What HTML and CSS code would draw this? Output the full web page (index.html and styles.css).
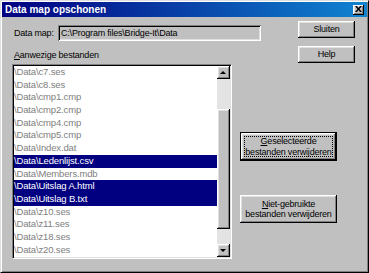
FILE: index.html
```html
<!DOCTYPE html>
<html>
<head>
<meta charset="utf-8">
<link rel="stylesheet" href="styles.css">
</head>
<body>
<div class="window">
  <div class="titlebar">
    <span class="title">Data map opschonen</span>
    <span class="close"><svg width="7" height="6" viewBox="0 0 7 6"><path d="M0 0h2l1.5 2L5 0h2L4.5 3 7 6H5L3.5 4 2 6H0l2.5-3z" fill="#000"/></svg></span>
  </div>
  <div class="content">
    <div class="fieldrow">
      <span class="lbl">Data map:</span>
      <div class="field">C:\Program files\Bridge-It\Data</div>
    </div>
    <button class="btn small sluiten">Sluiten</button>
    <div class="listlabel"><u>A</u>anwezige bestanden</div>
    <button class="btn small help">Help</button>
    <div class="listbox">
      <ul class="items">
        <li>\Data\c7.ses</li>
        <li>\Data\c8.ses</li>
        <li>\Data\cmp1.cmp</li>
        <li>\Data\cmp2.cmp</li>
        <li>\Data\cmp4.cmp</li>
        <li>\Data\cmp5.cmp</li>
        <li>\Data\Index.dat</li>
        <li class="sel">\Data\Ledenlijst.csv</li>
        <li>\Data\Members.mdb</li>
        <li class="sel">\Data\Uitslag A.html</li>
        <li class="sel">\Data\Uitslag B.txt</li>
        <li>\Data\z10.ses</li>
        <li>\Data\z11.ses</li>
        <li>\Data\z18.ses</li>
        <li>\Data\z20.ses</li>
      </ul>
      <div class="scrollbar">
        <div class="arrow"><span class="tri up"></span></div>
        <div class="track t1"></div>
        <div class="thumb"></div>
        <div class="track t2"></div>
        <div class="arrow"><span class="tri down"></span></div>
      </div>
    </div>
    <div class="actions">
      <button class="btn big default"><span class="focus"><span><u>G</u>eselecteerde</span><span>bestanden verwijderen</span></span></button>
      <button class="btn big second"><span class="inner"><span><u>N</u>iet-gebruikte</span><span>bestanden verwijderen</span></span></button>
    </div>
  </div>
</div>
</body>
</html>
```
FILE: styles.css
```css
html, body {
  margin: 0;
  padding: 0;
  background: #c0c0c0;
}
body {
  font-family: "Liberation Sans", Arial, sans-serif;
  font-size: 9px;
  color: #000;
}
.window {
  width: 369px;
  height: 273px;
  box-sizing: border-box;
  border: 1px solid;
  border-color: #dfdfdf #000 #000 #dfdfdf;
  box-shadow: inset 1px 1px #fff, inset -1px -1px #808080;
  padding: 1px;
  background: #c0c0c0;
  display: flex;
  flex-direction: column;
}
.titlebar {
  height: 15px;
  flex: none;
  background: linear-gradient(to right, #000080, #1084d0);
  display: flex;
  align-items: center;
  padding: 0 3px 0 3px;
  color: #fff;
  font-weight: bold;
  font-size: 10px;
}
.title {
  line-height: 15px;
}
.close {
  margin-left: auto;
  width: 11px;
  height: 10px;
  background: #c0c0c0;
  box-shadow: inset -1px -1px #000, inset 1px 1px #fff, inset -2px -2px #808080, inset 2px 2px #dfdfdf;
  display: flex;
  align-items: center;
  justify-content: center;
}
.close svg {
  display: block;
  margin: 0 1px 1px 0;
}
.content {
  display: grid;
  grid-template-columns: 220px 8px 58px 57px;
  grid-template-rows: 20px 23px 195px;
  padding: 4px 0 0 10px;
  letter-spacing: -0.2px;
}
.fieldrow {
  grid-column: 1 / 4;
  grid-row: 1;
  align-self: end;
  display: flex;
  align-items: center;
}
.lbl {
  width: 46px;
  padding-left: 2px;
  box-sizing: border-box;
  white-space: nowrap;
}
.field {
  width: 203px;
  height: 16px;
  box-sizing: border-box;
  padding: 0 0 0 3px;
  line-height: 16px;
  box-shadow: inset 1px 1px #808080, inset -1px -1px #fff, inset 2px 2px #000, inset -2px -2px #dfdfdf;
  white-space: nowrap;
  overflow: hidden;
}
.btn {
  font-family: inherit;
  font-size: inherit;
  letter-spacing: inherit;
  color: #000;
  background: #c0c0c0;
  border: none;
  margin: 0;
  padding: 0;
  box-shadow: inset -1px -1px #000, inset 1px 1px #fff, inset -2px -2px #808080, inset 2px 2px #dfdfdf;
}
.small {
  width: 57px;
  height: 17px;
  line-height: 15px;
  text-align: center;
}
.sluiten {
  grid-column: 4;
  grid-row: 1;
  align-self: start;
}
.help {
  grid-column: 4;
  grid-row: 2;
  align-self: start;
  margin-top: 5px;
}
.listlabel {
  grid-column: 1 / 3;
  grid-row: 2;
  padding-left: 2px;
  margin-top: 8px;
  line-height: 12px;
  white-space: nowrap;
}
.listbox {
  grid-column: 1;
  grid-row: 3;
  box-sizing: border-box;
  height: 195px;
  border: 1px solid;
  border-color: #808080 #fff #fff #808080;
  box-shadow: inset 1px 1px #000, inset -1px -1px #dfdfdf;
  padding: 1px;
  background: #fff;
  display: flex;
}
.items {
  flex: 1;
  list-style: none;
  margin: 0;
  padding: 0;
  min-width: 0;
  font-size: 9.5px;
  letter-spacing: -0.15px;
}
.items li {
  height: 12.7px;
  line-height: 12.7px;
  color: #808080;
  white-space: nowrap;
}
.items li.sel {
  background: #000080;
  color: #fff;
}
.scrollbar {
  width: 13px;
  flex: none;
  display: flex;
  flex-direction: column;
  background: #e3e3e3;
}
.arrow, .thumb {
  background: #c0c0c0;
  box-shadow: inset -1px -1px #000, inset 1px 1px #fff, inset -2px -2px #808080, inset 2px 2px #dfdfdf;
}
.arrow {
  height: 13px;
  flex: none;
  display: flex;
  align-items: center;
  justify-content: center;
}
.tri {
  width: 0;
  height: 0;
  border-left: 3px solid transparent;
  border-right: 3px solid transparent;
  margin: 0 1px 1px 0;
}
.tri.up {
  border-bottom: 3px solid #000;
}
.tri.down {
  border-top: 3px solid #000;
}
.t1 {
  height: 30px;
  flex: none;
}
.t2 {
  height: 15px;
  flex: none;
}
.thumb {
  flex: 1;
}
.actions {
  grid-column: 3 / 5;
  grid-row: 3;
  display: flex;
  flex-direction: column;
  align-items: flex-start;
  padding-top: 68px;
  gap: 34px;
}
.big {
  width: 97px;
  display: flex;
  box-sizing: border-box;
}
.default {
  height: 29px;
  border: 1px solid #000;
  padding: 3px;
}
.second {
  height: 28px;
  padding: 3px;
}
.focus, .inner {
  flex: 1;
  display: flex;
  flex-direction: column;
  align-items: center;
  justify-content: center;
  line-height: 10.5px;
  white-space: nowrap;
}
.focus {
  border: 1px dotted #000;
}
```
